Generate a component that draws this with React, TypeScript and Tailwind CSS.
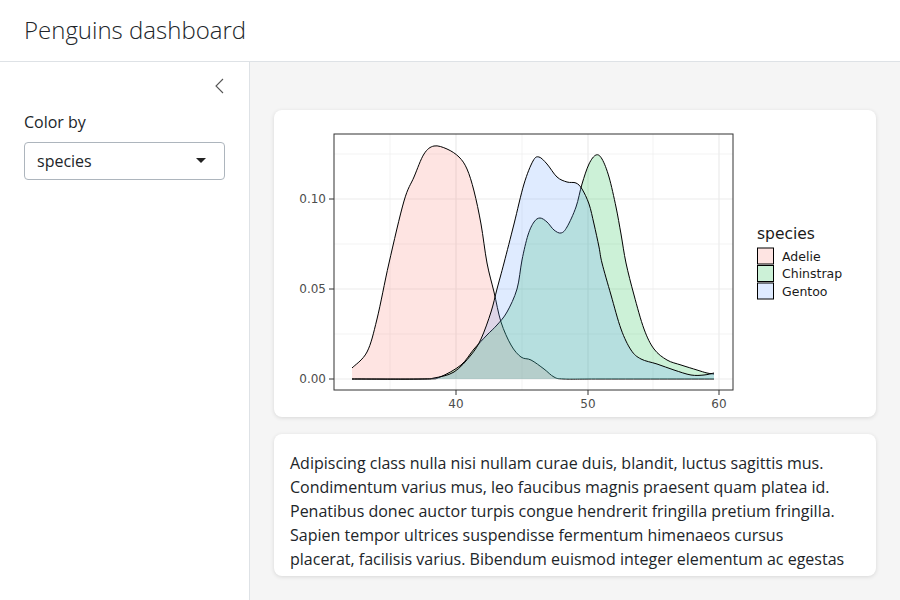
import React from 'react';

type Pt = [number, number];

// Catmull-Rom through the traced points, returned as cubic bezier path data
const smooth = (pts: Pt[]) => {
  let d = `M${pts[0][0]},${pts[0][1]}`;
  for (let i = 0; i < pts.length - 1; i++) {
    const p0 = pts[i - 1] || pts[i];
    const p1 = pts[i];
    const p2 = pts[i + 1];
    const p3 = pts[i + 2] || p2;
    const c1 = [p1[0] + (p2[0] - p0[0]) / 6, p1[1] + (p2[1] - p0[1]) / 6];
    const c2 = [p2[0] - (p3[0] - p1[0]) / 6, p2[1] - (p3[1] - p1[1]) / 6];
    d += ` C${c1[0]},${c1[1]} ${c2[0]},${c2[1]} ${p2[0]},${p2[1]}`;
  }
  return d;
};

const adelie: Pt[] = [
  [352, 368], [367, 352], [377, 319], [389, 263], [404, 201], [414, 177], [424, 154], [434, 146],
  [447, 149], [459, 157], [467, 169], [474, 191], [481, 224], [487, 263], [494, 292], [501, 322],
  [511, 345], [521, 357], [531, 360], [544, 369], [554, 377], [564, 379], [600, 379], [714, 379],
];

const chinstrap: Pt[] = [
  [352, 379], [425, 379], [440, 377], [461, 365], [474, 349], [487, 335], [497, 325], [507, 312],
  [517, 289], [522, 260], [528, 235], [534, 222], [540, 218], [547, 222], [554, 230], [561, 233],
  [567, 227], [576, 207], [582, 184], [589, 164], [596, 155], [602, 159], [609, 177], [616, 207],
  [621, 234], [626, 263], [634, 295], [644, 329], [654, 349], [667, 360], [681, 365], [697, 370],
  [707, 373], [714, 374],
];

const gentoo: Pt[] = [
  [352, 379], [420, 379], [434, 378], [454, 372], [471, 355], [481, 339], [491, 312], [497, 289],
  [504, 263], [514, 224], [524, 184], [533, 161], [539, 157], [547, 164], [557, 177], [567, 182],
  [576, 183], [582, 189], [589, 204], [594, 224], [599, 247], [602, 263], [611, 295], [621, 329],
  [631, 350], [641, 359], [657, 364], [674, 370], [691, 375], [704, 375], [714, 373],
];

const series = [
  { name: 'Adelie', pts: adelie, fill: '#F8766D' },
  { name: 'Chinstrap', pts: chinstrap, fill: '#00BA38' },
  { name: 'Gentoo', pts: gentoo, fill: '#619CFF' },
];

const xMajor = [456, 588, 719];
const xMinor = [390, 522, 653];
const yMajor = [379, 289, 199];
const yMinor = [334, 244, 154];

const DensityPlot = () => (
  <svg width={570} height={283} viewBox="290 126 570 283" style={{ fontFamily: '"DejaVu Sans", sans-serif' }}>
    {/* grid */}
    {yMinor.map((y) => (
      <line key={'ym' + y} x1={334} x2={733} y1={y} y2={y} stroke="#ebebeb" strokeWidth={0.6} />
    ))}
    {xMinor.map((x) => (
      <line key={'xm' + x} x1={x} x2={x} y1={134} y2={390} stroke="#ebebeb" strokeWidth={0.6} />
    ))}
    {yMajor.map((y) => (
      <line key={'yM' + y} x1={334} x2={733} y1={y} y2={y} stroke="#ebebeb" strokeWidth={1.2} />
    ))}
    {xMajor.map((x) => (
      <line key={'xM' + x} x1={x} x2={x} y1={134} y2={390} stroke="#ebebeb" strokeWidth={1.2} />
    ))}

    {/* densities */}
    {series.map((s) => {
      const line = smooth(s.pts);
      return (
        <g key={s.name}>
          <path d={`${line} L714,379 L352,379 Z`} fill={s.fill} fillOpacity={0.2} stroke="none" />
          <path d={line} fill="none" stroke="#000" strokeWidth={1} />
        </g>
      );
    })}

    {/* panel border */}
    <rect x={334} y={134} width={399} height={256} fill="none" stroke="#333" strokeWidth={1} />

    {/* y axis */}
    {[
      { y: 379, label: '0.00' },
      { y: 289, label: '0.05' },
      { y: 199, label: '0.10' },
    ].map((t) => (
      <g key={t.label}>
        <line x1={329} x2={334} y1={t.y} y2={t.y} stroke="#333" strokeWidth={1} />
        <text x={326} y={t.y + 4} textAnchor="end" fontSize={12} fill="#4d4d4d">
          {t.label}
        </text>
      </g>
    ))}

    {/* x axis */}
    {[
      { x: 456, label: '40' },
      { x: 588, label: '50' },
      { x: 719, label: '60' },
    ].map((t) => (
      <g key={t.label}>
        <line x1={t.x} x2={t.x} y1={390} y2={395} stroke="#333" strokeWidth={1} />
        <text x={t.x} y={407.5} textAnchor="middle" fontSize={12} fill="#4d4d4d">
          {t.label}
        </text>
      </g>
    ))}

    {/* legend */}
    <text x={757} y={239} fontSize={15.5} fill="#1a1a1a">
      species
    </text>
    {series.map((s, i) => (
      <g key={'lg' + s.name}>
        <rect x={757.5} y={248 + i * 17.5} width={16} height={16} fill="#fff" stroke="none" />
        <rect x={757.5} y={248 + i * 17.5} width={16} height={16} fill={s.fill} fillOpacity={0.2} stroke="#000" strokeWidth={1} />
        <text x={782} y={260.5 + i * 17.5} fontSize={12.5} fill="#1a1a1a">
          {s.name}
        </text>
      </g>
    ))}
  </svg>
);

const App = () => {
  return (
    <div className="h-[600px] flex flex-col bg-white text-[#212529] font-['Open_Sans',sans-serif] overflow-hidden">
      <header className="h-[62px] shrink-0 border-b border-[#dee2e6] px-6 flex items-center">
        <h1 className="text-2xl font-light -mt-[2px]">Penguins dashboard</h1>
      </header>

      <div className="flex flex-1 min-h-0">
        <aside className="w-[250px] shrink-0 border-r border-[#dee2e6] px-6 pt-4">
          <div className="flex justify-end h-4">
            <svg width={16} height={16} viewBox="0 0 16 16" className="-mr-[3px]">
              <polyline points="11,1 4,8 11,15" fill="none" stroke="#555" strokeWidth={1.1} />
            </svg>
          </div>
          <label className="block mt-4 mb-2 leading-6">Color by</label>
          <div className="h-[38px] border border-[#adb5bd] rounded flex items-center justify-between pl-3 pr-[18px]">
            <span>species</span>
            <svg width={10} height={6} viewBox="0 0 10 6">
              <polygon points="0,0 10,0 5,5" fill="#222" />
            </svg>
          </div>
        </aside>

        <main className="flex-1 bg-[#f5f5f5] px-6 pt-12 pb-6 flex flex-col gap-[17px] min-h-0">
          <div className="h-[307px] shrink-0 bg-white rounded-lg shadow-[0_1px_4px_rgba(0,0,0,0.12)] px-4 pt-4 pb-2">
            <DensityPlot />
          </div>
          <div className="flex-1 min-h-0 overflow-hidden bg-white rounded-lg shadow-[0_1px_4px_rgba(0,0,0,0.12)] px-4 pt-[17px] pr-6 leading-6">
            <p>
              Adipiscing class nulla nisi nullam curae duis, blandit, luctus sagittis mus. Condimentum varius mus, leo
              faucibus magnis praesent quam platea id. Penatibus donec auctor turpis congue hendrerit fringilla pretium
              fringilla. Sapien tempor ultrices suspendisse fermentum himenaeos cursus placerat, facilisis varius.
              Bibendum euismod integer elementum ac egestas dignissim mi.
            </p>
          </div>
        </main>
      </div>
    </div>
  );
};

export default App;
